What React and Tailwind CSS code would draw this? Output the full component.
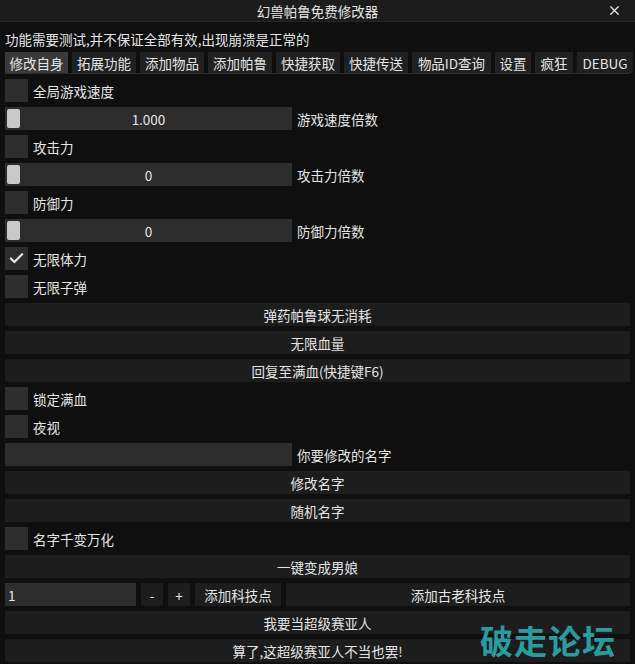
import { Check, X } from 'lucide-react';

const tabs = [
  { t: '修改自身', w: 'w-[63px]' },
  { t: '拓展功能', w: 'w-[64px]' },
  { t: '添加物品', w: 'w-[64px]' },
  { t: '添加帕鲁', w: 'w-[64px]' },
  { t: '快捷获取', w: 'w-[64px]' },
  { t: '快捷传送', w: 'w-[64px]' },
  { t: '物品ID查询', w: 'w-[79px]' },
  { t: '设置', w: 'w-[36px]' },
  { t: '疯狂', w: 'w-[38px]' },
  { t: 'DEBUG', w: 'w-[56px]' },
];

const CheckRow = ({ label, checked }) => (
  <div className="flex items-center h-[23px] gap-[5px]">
    <div className="w-[23px] h-[23px] bg-[#2e2e2e] flex items-center justify-center">
      {checked && <Check size={17} strokeWidth={3} className="text-[#e8e8e8]" />}
    </div>
    <span>{label}</span>
  </div>
);

const SliderRow = ({ value, label }) => (
  <div className="flex items-center h-[23px] gap-[5px]">
    <div className="relative w-[287px] h-[23px] bg-[#2d2d2d] flex items-center justify-center">
      <div className="absolute left-[2px] top-[2px] w-[13px] h-[19px] bg-[#c9c9c9] rounded-[2px]" />
      <span>{value}</span>
    </div>
    <span>{label}</span>
  </div>
);

const Button = ({ label }) => (
  <div className="h-[23px] bg-[#1d1d1d] flex items-center justify-center">{label}</div>
);

export default function App() {
  return (
    <div
      className="relative w-[635px] h-[664px] bg-[#0f0f0f] text-[#e4e4e4] text-[13.5px] leading-[18px] overflow-hidden"
      style={{ fontFamily: '"Noto Sans CJK SC", "Noto Sans", sans-serif' }}
    >
      {/* title bar */}
      <div className="relative h-[22px] bg-[#1c1c1c] border-b border-[#262626] flex items-center justify-center">
        <span>幻兽帕鲁免费修改器</span>
        <X size={15} strokeWidth={2} className="absolute right-[13px] top-[3px] text-[#e4e4e4]" />
      </div>

      <div className="px-[5px] pt-[8px]">
        <div className="h-[18px] whitespace-nowrap">功能需要测试,并不保证全部有效,出现崩溃是正常的</div>

        {/* tabs */}
        <div className="mt-[4px] flex gap-[4px] border-b border-[#2c2c2c] whitespace-nowrap">
          {tabs.map((tab, i) => (
            <div
              key={tab.t}
              className={`${tab.w} shrink-0 h-[21px] flex items-center justify-center ${i === 0 ? 'bg-[#3a3a3a]' : 'bg-[#212121]'}`}
            >
              {tab.t}
            </div>
          ))}
        </div>

        {/* rows */}
        <div className="mt-[5px] flex flex-col gap-[5px]">
          <CheckRow label="全局游戏速度" />
          <SliderRow value="1.000" label="游戏速度倍数" />
          <CheckRow label="攻击力" />
          <SliderRow value="0" label="攻击力倍数" />
          <CheckRow label="防御力" />
          <SliderRow value="0" label="防御力倍数" />
          <CheckRow label="无限体力" checked />
          <CheckRow label="无限子弹" />
          <Button label="弹药帕鲁球无消耗" />
          <Button label="无限血量" />
          <Button label="回复至满血(快捷键F6)" />
          <CheckRow label="锁定满血" />
          <CheckRow label="夜视" />
          <div className="flex items-center h-[23px] gap-[5px]">
            <div className="w-[287px] h-[23px] bg-[#2d2d2d]" />
            <span>你要修改的名字</span>
          </div>
          <Button label="修改名字" />
          <Button label="随机名字" />
          <CheckRow label="名字千变万化" />
          <Button label="一键变成男娘" />
          <div className="flex items-center h-[23px] gap-[5px]">
            <div className="w-[131px] h-[23px] bg-[#2d2d2d] flex items-center px-[3px]">1</div>
            <div className="w-[22px] h-[23px] bg-[#1d1d1d] flex items-center justify-center">-</div>
            <div className="w-[22px] h-[23px] bg-[#1d1d1d] flex items-center justify-center">+</div>
            <div className="w-[86px] h-[23px] bg-[#1d1d1d] flex items-center justify-center">添加科技点</div>
            <div className="flex-1 h-[23px] bg-[#1d1d1d] flex items-center justify-center">添加古老科技点</div>
          </div>
          <Button label="我要当超级赛亚人" />
          <Button label="算了,这超级赛亚人不当也罢!" />
        </div>
      </div>

      {/* watermark */}
      <div className="absolute left-[480px] top-[620px] text-[33px] leading-[40px] font-bold text-[#2a9c9f] tracking-[1px]">
        破走论坛
      </div>
    </div>
  );
}
